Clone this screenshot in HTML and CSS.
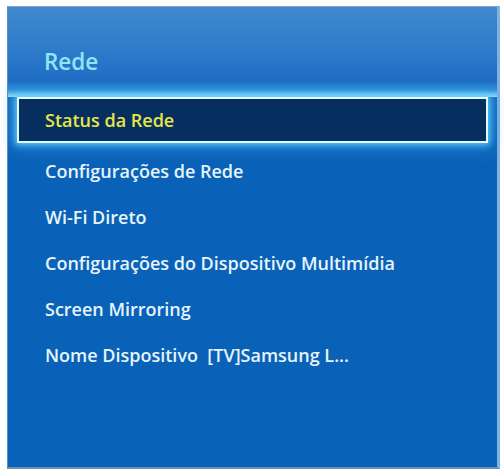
FILE: index.html
```html
<!DOCTYPE html>
<html lang="pt">
<head>
<meta charset="utf-8">
<title>Rede</title>
<link rel="stylesheet" href="styles.css">
</head>
<body>
<div class="panel">
  <div class="header"><span class="title">Rede</span></div>
  <ul class="menu">
    <li class="item selected">Status da Rede</li>
    <li class="item">Configurações de Rede</li>
    <li class="item">Wi-Fi Direto</li>
    <li class="item">Configurações do Dispositivo Multimídia</li>
    <li class="item">Screen Mirroring</li>
    <li class="item">Nome Dispositivo&nbsp;&nbsp;[TV]Samsung L...</li>
  </ul>
</div>
</body>
</html>
```
FILE: styles.css
```css
html, body {
  margin: 0;
  padding: 0;
  background: #ffffff;
}
body {
  width: 504px;
  height: 473px;
  overflow: hidden;
  font-family: "Open Sans", "Noto Sans", sans-serif;
}
.panel {
  margin: 6px 0 0 7px;
  width: 493px;
  height: 463px;
  box-sizing: border-box;
  background: linear-gradient(to bottom, #4189cf 0px, #2f7ccb 40px, #1c6cc3 78px, #1767c0 88px, #0a62b8 160px, #0862b8 100%);
  border-left: 1px solid #5d8fc4;
  border-right: 3px solid #7fb2e2;
  border-bottom: 2px solid #6f8fb0;
  border-top: 1px solid #7aa6d6;
  display: flex;
  flex-direction: column;
}
.header {
  height: 90px;
  box-sizing: border-box;
  padding: 40px 0 0 36px;
  background: linear-gradient(to bottom, rgba(0,0,0,0) 74px, rgba(80,200,255,0.4) 83px, rgba(180,245,255,0.9) 90px);
}
.title {
  display: block;
  line-height: 30px;
  font-size: 22.5px;
  font-weight: 600;
  color: #8fe6f2;
}
.menu {
  list-style: none;
  margin: 0;
  padding: 0 9px 0 9px;
  display: flex;
  flex-direction: column;
}
.item {
  height: 46px;
  line-height: 46px;
  padding-left: 28px;
  font-size: 18px;
  font-weight: 600;
  color: #e6f4fb;
  white-space: nowrap;
}
.item.selected {
  height: 46px;
  line-height: 42px;
  box-sizing: border-box;
  padding-left: 26px;
  margin-bottom: 5px;
  background: #062f5f;
  border: 2px solid #e4faff;
  box-shadow: 0 0 6px 2px rgba(90, 215, 255, 0.85), 0 0 14px 4px rgba(60, 170, 240, 0.5);
  color: #e6e64a;
}
```
